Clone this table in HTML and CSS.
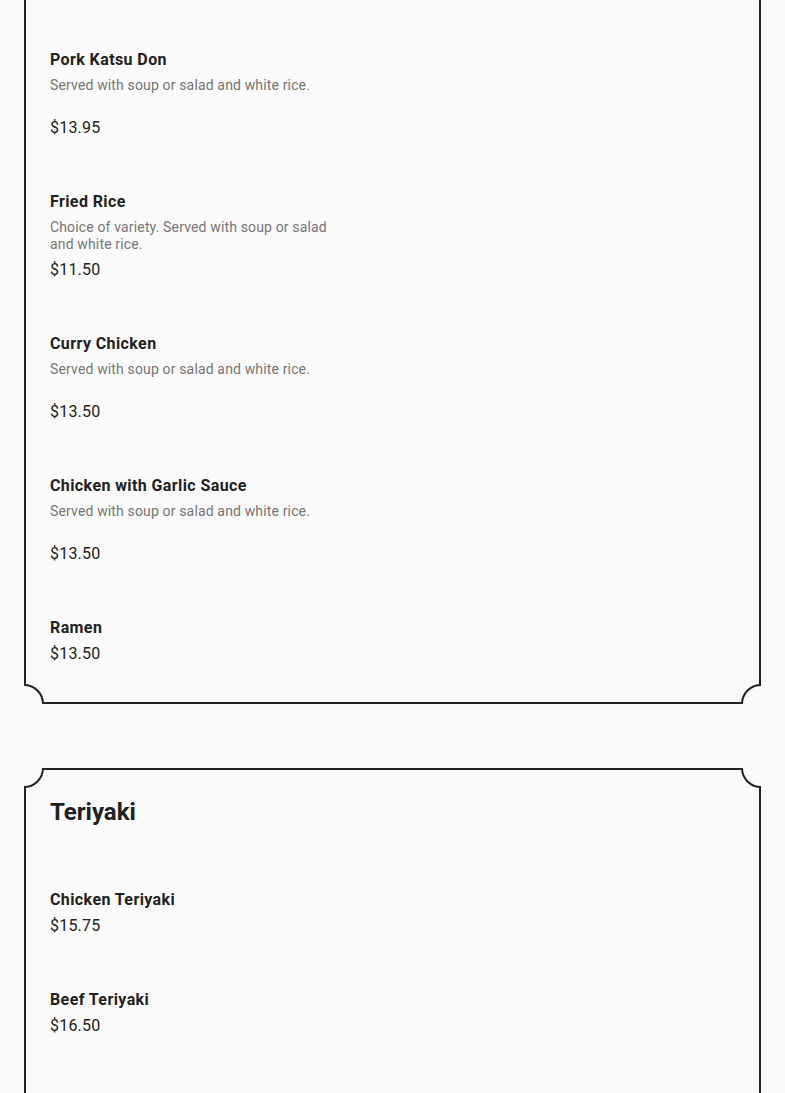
FILE: index.html
```html
<!DOCTYPE html>
<html lang="en">
<head>
<meta charset="utf-8">
<title>Menu</title>
<link rel="stylesheet" href="styles.css">
</head>
<body>
<main class="menu">
  <section class="card card--continued">
    <article class="item">
      <h3 class="item__name">Pork Katsu Don</h3>
      <p class="item__desc">Served with soup or salad and white rice.</p>
      <p class="item__price">$13.95</p>
    </article>
    <article class="item">
      <h3 class="item__name">Fried Rice</h3>
      <p class="item__desc">Choice of variety. Served with soup or salad and white rice.</p>
      <p class="item__price">$11.50</p>
    </article>
    <article class="item">
      <h3 class="item__name">Curry Chicken</h3>
      <p class="item__desc">Served with soup or salad and white rice.</p>
      <p class="item__price">$13.50</p>
    </article>
    <article class="item">
      <h3 class="item__name">Chicken with Garlic Sauce</h3>
      <p class="item__desc">Served with soup or salad and white rice.</p>
      <p class="item__price">$13.50</p>
    </article>
    <article class="item">
      <h3 class="item__name">Ramen</h3>
      <p class="item__price">$13.50</p>
    </article>
    <span class="corner corner--bl"></span>
    <span class="corner corner--br"></span>
  </section>

  <section class="card">
    <h2 class="card__title">Teriyaki</h2>
    <article class="item">
      <h3 class="item__name">Chicken Teriyaki</h3>
      <p class="item__price">$15.75</p>
    </article>
    <article class="item">
      <h3 class="item__name">Beef Teriyaki</h3>
      <p class="item__price">$16.50</p>
    </article>
    <article class="item item--fading">
      <h3 class="item__name">Salmon Teriyaki</h3>
      <p class="item__price">$17.50</p>
    </article>
    <span class="corner corner--tl"></span>
    <span class="corner corner--tr"></span>
    <span class="corner corner--bl"></span>
    <span class="corner corner--br"></span>
  </section>
</main>
</body>
</html>
```

FILE: styles.css
```css
*, *::before, *::after { box-sizing: border-box; }

html, body {
  margin: 0;
  padding: 0;
  background: #fafafa;
  font-family: Roboto, "Noto Sans", Arial, sans-serif;
  color: #212121;
}

.menu {
  display: flex;
  flex-direction: column;
  gap: 64px;
  padding: 0 24px 40px;
}

.card {
  position: relative;
  border: 2px solid #222;
  background: #fafafa;
  padding: 26px 24px 12px;
}

.card--continued {
  border-top: none;
  padding-top: 23px;
  padding-bottom: 11px;
}

.card__title {
  margin: 0 0 35px;
  font-size: 24px;
  line-height: 32px;
  font-weight: 700;
  color: #212121;
}

.item {
  padding: 25px 0;
  display: flex;
  flex-direction: column;
}

.item__name {
  margin: 0 0 2px;
  font-size: 16px;
  line-height: 24px;
  font-weight: 700;
  letter-spacing: 0.4px;
  color: #212121;
}

.item__desc {
  margin: 3px 0 5px;
  max-width: 295px;
  min-height: 34px;
  font-size: 14px;
  line-height: 17px;
  letter-spacing: 0.15px;
  color: #757575;
}

.item__price {
  margin: 0;
  font-size: 16px;
  line-height: 24px;
  font-weight: 400;
  letter-spacing: 0.2px;
  color: #212121;
}

.item--fading { opacity: 0.12; }

.corner {
  position: absolute;
  width: 20px;
  height: 20px;
  overflow: hidden;
  background: #fafafa;
}
.corner::before {
  content: "";
  position: absolute;
  width: 40px;
  height: 40px;
  border: 2px solid #222;
  border-radius: 50%;
}
.corner--tl { top: -2px; left: -2px; }
.corner--tl::before { top: -20px; left: -20px; }
.corner--tr { top: -2px; right: -2px; }
.corner--tr::before { top: -20px; right: -20px; }
.corner--bl { bottom: -2px; left: -2px; }
.corner--bl::before { bottom: -20px; left: -20px; }
.corner--br { bottom: -2px; right: -2px; }
.corner--br::before { bottom: -20px; right: -20px; }
```
